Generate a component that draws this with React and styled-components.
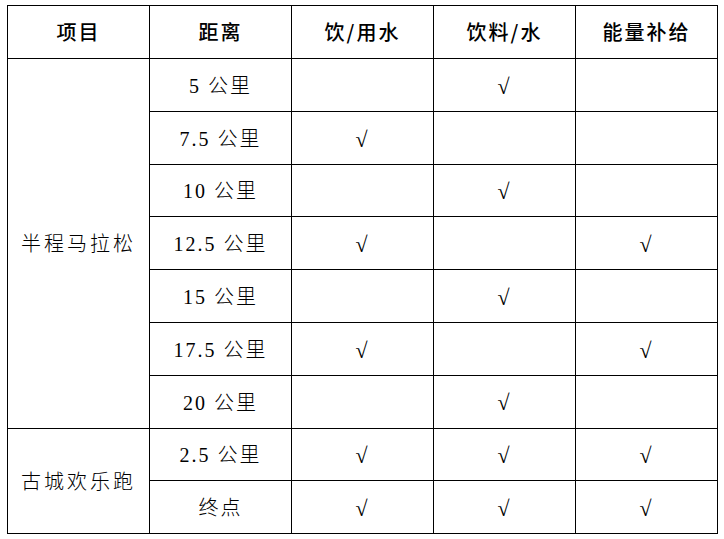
import React from "react";
import styled, { createGlobalStyle } from "styled-components";

const Global = createGlobalStyle`
  html, body { margin: 0; padding: 0; background: #fff; }
  body { font-family: "Liberation Serif", "Noto Sans CJK SC", serif; color: #000; }
`;

const Page = styled.div`
  padding: 5px 0 0 7px;
`;

const Table = styled.table`
  border-collapse: collapse;
  table-layout: fixed;
  width: 710px;
`;

const Col = styled.col`
  width: 142px;
`;

const HeadCell = styled.th`
  height: 51px;
  border: 1.5px solid #000;
  padding: 0 0 1px;
  text-align: center;
  vertical-align: middle;
  font-family: "Noto Sans CJK SC", sans-serif;
  font-weight: 500;
  font-size: 20px;
  letter-spacing: 2px;
`;

const Cell = styled.td`
  height: 49.8px;
  border: 1.5px solid #000;
  padding: 2px 0 0;
  text-align: center;
  vertical-align: middle;
  font-family: "Liberation Serif", "Noto Sans CJK SC", serif;
  font-weight: 300;
  font-size: 20px;
  line-height: 1.2;
  letter-spacing: ${(p) => (p.$group ? "3px" : "2px")};
`;

const Check = styled.span`
  font-family: "Liberation Serif", "DejaVu Serif", serif;
  font-weight: 400;
  font-size: 22px;
  display: inline-block;
  transform: translateY(1px);
`;

const groups = [
  {
    name: "半程马拉松",
    rows: [
      ["5 公里", 0, 1, 0],
      ["7.5 公里", 1, 0, 0],
      ["10 公里", 0, 1, 0],
      ["12.5 公里", 1, 0, 1],
      ["15 公里", 0, 1, 0],
      ["17.5 公里", 1, 0, 1],
      ["20 公里", 0, 1, 0],
    ],
  },
  {
    name: "古城欢乐跑",
    rows: [
      ["2.5 公里", 1, 1, 1],
      ["终点", 1, 1, 1],
    ],
  },
];

export default function App() {
  return (
    <Page>
      <Global />
      <Table>
        <colgroup>
          <Col />
          <Col />
          <Col />
          <Col />
          <Col />
        </colgroup>
        <thead>
          <tr>
            <HeadCell>项目</HeadCell>
            <HeadCell>距离</HeadCell>
            <HeadCell>饮/用水</HeadCell>
            <HeadCell>饮料/水</HeadCell>
            <HeadCell>能量补给</HeadCell>
          </tr>
        </thead>
        <tbody>
          {groups.map((g) =>
            g.rows.map((r, i) => (
              <tr key={g.name + i}>
                {i === 0 && (
                  <Cell $group rowSpan={g.rows.length}>
                    {g.name}
                  </Cell>
                )}
                <Cell>{r[0]}</Cell>
                {[1, 2, 3].map((k) => (
                  <Cell key={k}>{r[k] ? <Check>√</Check> : null}</Cell>
                ))}
              </tr>
            ))
          )}
        </tbody>
      </Table>
    </Page>
  );
}
